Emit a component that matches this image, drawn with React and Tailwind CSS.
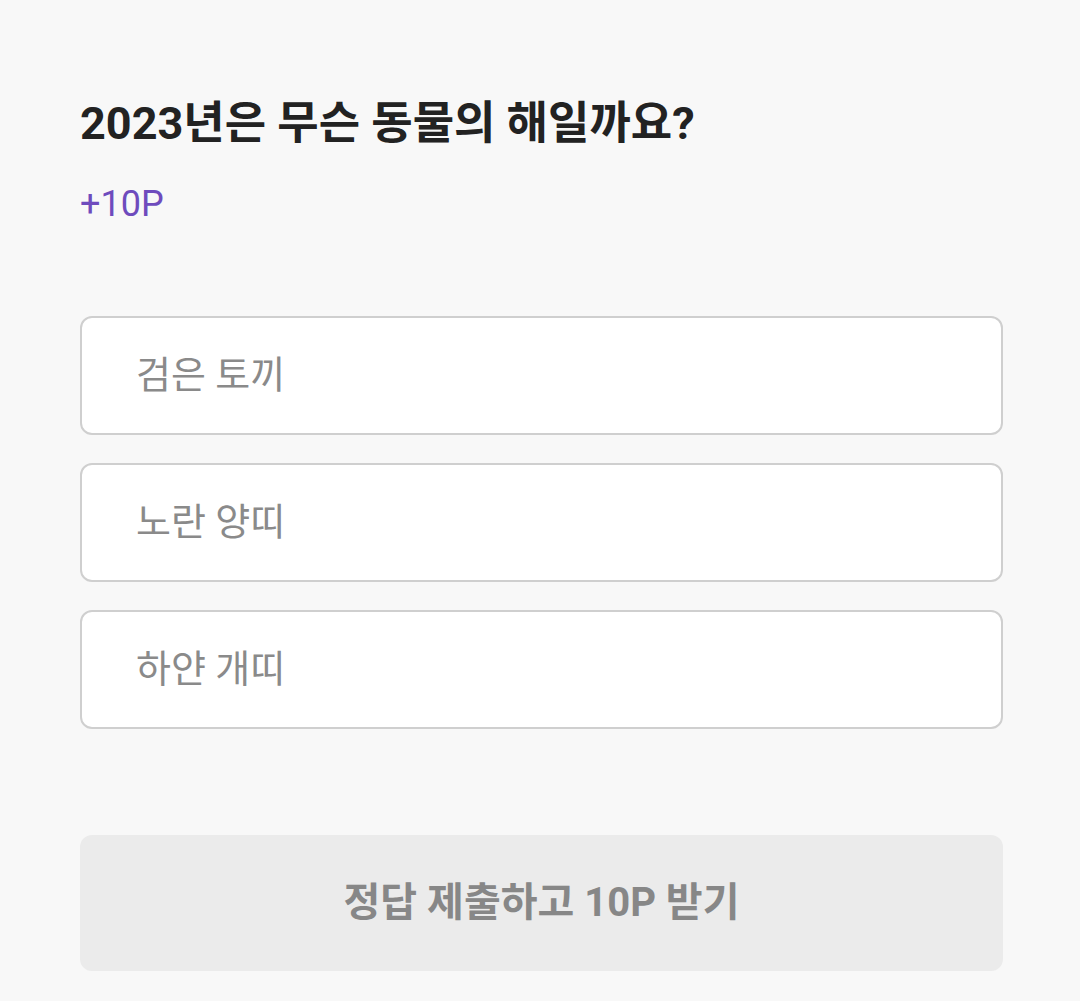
const FONT = { fontFamily: 'Roboto, "Noto Sans CJK KR", sans-serif' }

const options = ['검은 토끼', '노란 양띠', '하얀 개띠']

export default function App() {
  return (
    <div className="min-h-[1001px] bg-[#f8f8f8] px-[80px] pt-[94px]" style={FONT}>
      <h1 className="text-[45px] font-bold leading-[60px] text-[#222222]">2023년은 무슨 동물의 해일까요?</h1>
      <p className="mt-[28px] text-[36px] leading-[44px] text-[#6e4bbd]">+10P</p>

      <div className="mt-[90px] flex w-[923px] flex-col gap-[28px]">
        {options.map((o) => (
          <button
            key={o}
            className="flex h-[119px] items-center rounded-[12px] border-2 border-[#cfcfcf] bg-white pl-[54px] text-left text-[38px] text-[#8a8a8a]"
          >
            {o}
          </button>
        ))}
      </div>

      <button className="mt-[106px] flex h-[136px] w-[923px] items-center justify-center rounded-[12px] bg-[#ebebeb] text-[40px] font-bold text-[#878787]">
        정답 제출하고 10P 받기
      </button>
    </div>
  )
}
